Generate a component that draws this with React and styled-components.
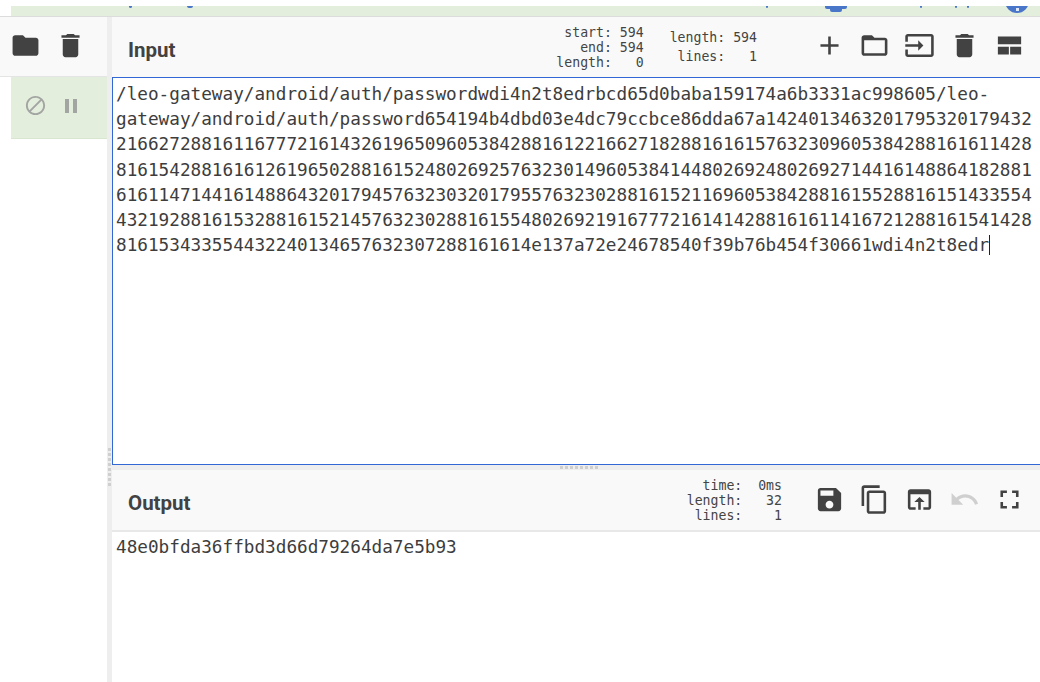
import React from "react";
import styled, { createGlobalStyle } from "styled-components";

const Global = createGlobalStyle`
  html, body {
    margin: 0;
    padding: 0;
    background: #fff;
  }
  #root {
    width: 1040px;
    height: 682px;
    overflow: hidden;
  }
`;

const Page = styled.div`
  width: 1040px;
  height: 682px;
  display: flex;
  flex-direction: column;
  background: #fff;
  color: #424242;
`;

const Banner = styled.div`
  margin-top: 6px;
  height: 11px;
  flex: none;
  box-sizing: border-box;
  padding-left: 11px;
  border-bottom: 1px solid #dcdcdc;
`;

const BannerFill = styled.div`
  height: 10px;
  background: #e4eedd;
  overflow: hidden;
  position: relative;
`;

const BannerMark = styled.span`
  position: absolute;
  top: 0;
  left: ${(p) => p.$left - 11}px;
  width: ${(p) => p.$w}px;
  height: ${(p) => p.$h}px;
  background: #4a76c9;
  border-radius: 0 0 2px 2px;
`;

const BannerBadge = styled.span`
  position: absolute;
  top: -17px;
  left: ${1005 - 11}px;
  width: 24px;
  height: 24px;
  border-radius: 50%;
  background: #4a76c9;

  &::after {
    content: "";
    position: absolute;
    left: 11px;
    top: 19px;
    width: 3px;
    height: 3px;
    background: #dfe8f7;
  }
`;

const Body = styled.div`
  flex: 1;
  display: flex;
  min-height: 0;
`;

const Side = styled.div`
  width: 107px;
  flex: none;
  display: flex;
  flex-direction: column;
`;

const SideHead = styled.div`
  height: 60px;
  flex: none;
  display: flex;
  align-items: center;
  box-sizing: border-box;
  background: #f9f9f9;
  border-bottom: 1px solid #e4e4e4;
  padding: 0 0 2px 10px;
  gap: 14px;
  color: #424242;
`;

const SideRow = styled.div`
  height: 62px;
  flex: none;
  margin-left: 11px;
  box-sizing: border-box;
  background: #e4eedd;
  border-bottom: 1px solid #d9e6cf;
  display: flex;
  align-items: center;
  padding: 0 0 4px 13px;
  gap: 12px;
  color: #a3a5a2;
`;

const Gutter = styled.div`
  width: 5px;
  flex: none;
  background: #eeeeee;
  position: relative;
`;

const GutterGrip = styled.span`
  position: absolute;
  top: 431px;
  left: 1px;
  width: 3px;
  height: 39px;
  background: repeating-linear-gradient(to bottom, #cfcfcf 0 3px, transparent 3px 5px);
`;

const Main = styled.div`
  flex: 1;
  display: flex;
  flex-direction: column;
  min-width: 0;
`;

const Toolbar = styled.div`
  height: 60px;
  flex: none;
  display: flex;
  align-items: center;
  background: #f9f9f9;
  padding-left: 16px;
  box-sizing: border-box;
`;

const Title = styled.div`
  padding-top: 5px;
  font: 700 20.5px Roboto, sans-serif;
  color: #424242;
`;

const Stats = styled.div`
  margin-left: auto;
  display: flex;
  align-items: center;
  gap: 26px;
`;

const StatBlock = styled.pre`
  margin: 0;
  font: 13.2px/${(p) => p.$lh}px "DejaVu Sans Mono", monospace;
  color: #444;
  text-align: right;
`;

const Tools = styled.div`
  display: flex;
  align-items: center;
  margin-left: ${(p) => p.$offset}px;
  margin-right: 15px;
  padding-bottom: ${(p) => p.$lift}px;
  gap: 14px;
  color: #424242;
`;

const InputBox = styled.div`
  height: 388px;
  flex: none;
  box-sizing: border-box;
  border: 1px solid #3367d6;
  border-right: none;
  padding: 4px 0 0 3px;
  font: 17.7px/25.2px "DejaVu Sans Mono", monospace;
  color: #3d3d3d;
  white-space: pre;
  overflow: hidden;
  background: #fff;
`;

const Caret = styled.span`
  display: inline-block;
  width: 1px;
  height: 20px;
  background: #222;
  vertical-align: -4px;
`;

const Divider = styled.div`
  height: 5px;
  flex: none;
  background: #eeeeee;
  position: relative;
`;

const DividerGrip = styled.span`
  position: absolute;
  left: 448px;
  top: 1px;
  width: 38px;
  height: 3px;
  background: repeating-linear-gradient(to right, #cfcfcf 0 3px, transparent 3px 5px);
`;

const OutputBox = styled.div`
  flex: 1;
  border-top: 2px solid #e8e8e8;
  padding: 3px 0 0 4px;
  font: 17.7px/25.2px "DejaVu Sans Mono", monospace;
  color: #3d3d3d;
`;

const inputLines = [
  "/leo-gateway/android/auth/passwordwdi4n2t8edrbcd65d0baba159174a6b3331ac998605/leo-",
  "gateway/android/auth/password654194b4dbd03e4dc79ccbce86dda67a1424013463201795320179432",
  "21662728816116777216143261965096053842881612216627182881616157632309605384288161611428",
  "81615428816161261965028816152480269257632301496053841448026924802692714416148864182881",
  "61611471441614886432017945763230320179557632302881615211696053842881615528816151433554",
  "43219288161532881615214576323028816155480269219167772161414288161611416721288161541428",
  "816153433554432240134657632307288161614e137a72e24678540f39b76b454f30661wdi4n2t8edr",
];

const Icon = ({ size = 31, children, fill = "currentColor" }) => (
  <svg width={size} height={size} viewBox="0 0 24 24" fill={fill}>
    {children}
  </svg>
);

const FolderSolid = () => (
  <Icon>
    <path d="M10 4H4c-1.1 0-2 .9-2 2v12c0 1.1.9 2 2 2h16c1.1 0 2-.9 2-2V8c0-1.1-.9-2-2-2h-8l-2-2z" />
  </Icon>
);

const FolderOutline = () => (
  <Icon>
    <path d="M10 4H4c-1.1 0-2 .9-2 2v12c0 1.1.9 2 2 2h16c1.1 0 2-.9 2-2V8c0-1.1-.9-2-2-2h-8l-2-2zm10 14H4V8h16v10z" />
  </Icon>
);

const Trash = () => (
  <Icon>
    <path d="M6 19c0 1.1.9 2 2 2h8c1.1 0 2-.9 2-2V7H6v12zM19 4h-3.5l-1-1h-5l-1 1H5v2h14V4z" />
  </Icon>
);

const Plus = () => (
  <Icon>
    <path d="M19 13h-6v6h-2v-6H5v-2h6V5h2v6h6v2z" />
  </Icon>
);

const InputIcon = () => (
  <Icon>
    <path d="M21 3.01H3c-1.1 0-2 .9-2 2V9h2V4.99h18v14.03H3V15H1v4.01c0 1.1.9 1.98 2 1.98h18c1.1 0 2-.88 2-1.98v-14c0-1.11-.9-2-2-2zM11 16l4-4-4-4v3H1v2h10v3z" />
  </Icon>
);

const LayoutIcon = () => (
  <Icon>
    <path d="M3 5v6h18V5H3zm0 8v6h8.5v-6H3zm9.5 0v6H21v-6h-8.5z" />
  </Icon>
);

const Save = () => (
  <Icon>
    <path d="M17 3H5c-1.11 0-2 .9-2 2v14c0 1.1.89 2 2 2h14c1.1 0 2-.9 2-2V7l-4-4zm-5 16c-1.66 0-3-1.34-3-3s1.34-3 3-3 3 1.34 3 3-1.34 3-3 3zm3-10H5V5h10v4z" />
  </Icon>
);

const Copy = () => (
  <Icon>
    <path d="M16 1H4c-1.1 0-2 .9-2 2v14h2V3h12V1zm3 4H8c-1.1 0-2 .9-2 2v14c0 1.1.9 2 2 2h11c1.1 0 2-.9 2-2V7c0-1.1-.9-2-2-2zm0 16H8V7h11v14z" />
  </Icon>
);

const OpenInBrowser = () => (
  <Icon>
    <path d="M19 4H5c-1.11 0-2 .9-2 2v12c0 1.1.89 2 2 2h4v-2H5V8h14v10h-4v2h4c1.1 0 2-.9 2-2V6c0-1.1-.89-2-2-2zm-7 6l-4 4h3v6h2v-6h3l-4-4z" />
  </Icon>
);

const Undo = () => (
  <Icon fill="#cfcfcf">
    <path d="M12.5 8c-2.65 0-5.05.99-6.9 2.6L2 7v9h9l-3.62-3.62c1.39-1.16 3.16-1.88 5.12-1.88 3.54 0 6.55 2.31 7.6 5.5l2.37-.78C21.08 11.03 17.15 8 12.5 8z" />
  </Icon>
);

const Fullscreen = () => (
  <Icon>
    <path d="M7 14H5v5h5v-2H7v-3zm-2-4h2V7h3V5H5v5zm12 7h-3v2h5v-5h-2v3zM14 5v2h3v3h2V5h-5z" />
  </Icon>
);

const Ban = () => (
  <Icon size={23}>
    <path d="M12 2C6.48 2 2 6.48 2 12s4.48 10 10 10 10-4.48 10-10S17.52 2 12 2zM4 12c0-4.42 3.58-8 8-8 1.85 0 3.55.63 4.9 1.69L5.69 16.9C4.63 15.55 4 13.85 4 12zm8 8c-1.85 0-3.55-.63-4.9-1.69L18.31 7.1C19.37 8.45 20 10.15 20 12c0 4.42-3.58 8-8 8z" />
  </Icon>
);

const Pause = () => (
  <Icon size={24}>
    <path d="M6 19h4V5H6v14zm8-14v14h4V5h-4z" />
  </Icon>
);

export default function App() {
  return (
    <Page>
      <Global />
      <Banner>
        <BannerFill>
          <BannerMark $left={129} $w={3} $h={2} />
          <BannerMark $left={187} $w={6} $h={2} />
          <BannerMark $left={766} $w={2} $h={2} />
          <BannerMark $left={825} $w={22} $h={3} />
          <BannerMark $left={830} $w={12} $h={6} />
          <BannerMark $left={920} $w={2} $h={2} />
          <BannerMark $left={955} $w={2} $h={2} />
          <BannerMark $left={967} $w={2} $h={2} />
          <BannerBadge />
        </BannerFill>
      </Banner>
      <Body>
        <Side>
          <SideHead>
            <FolderSolid />
            <Trash />
          </SideHead>
          <SideRow>
            <Ban />
            <Pause />
          </SideRow>
        </Side>
        <Gutter>
          <GutterGrip />
        </Gutter>
        <Main>
          <Toolbar>
            <Title>Input</Title>
            <Stats>
              <StatBlock $lh={15}>{"start: 594\n  end: 594\nlength:   0"}</StatBlock>
              <StatBlock $lh={19}>{"length: 594\n lines:   1"}</StatBlock>
            </Stats>
            <Tools $offset={57} $lift={4}>
              <Plus />
              <FolderOutline />
              <InputIcon />
              <Trash />
              <LayoutIcon />
            </Tools>
          </Toolbar>
          <InputBox>
            {inputLines.map((line, i) => (
              <div key={i}>
                {line}
                {i === inputLines.length - 1 && <Caret />}
              </div>
            ))}
          </InputBox>
          <Divider>
            <DividerGrip />
          </Divider>
          <Toolbar>
            <Title>Output</Title>
            <Stats>
              <StatBlock $lh={15}>{"  time:  0ms\nlength:   32\n lines:    1"}</StatBlock>
            </Stats>
            <Tools $offset={32} $lift={2}>
              <Save />
              <Copy />
              <OpenInBrowser />
              <Undo />
              <Fullscreen />
            </Tools>
          </Toolbar>
          <OutputBox>48e0bfda36ffbd3d66d79264da7e5b93</OutputBox>
        </Main>
      </Body>
    </Page>
  );
}
